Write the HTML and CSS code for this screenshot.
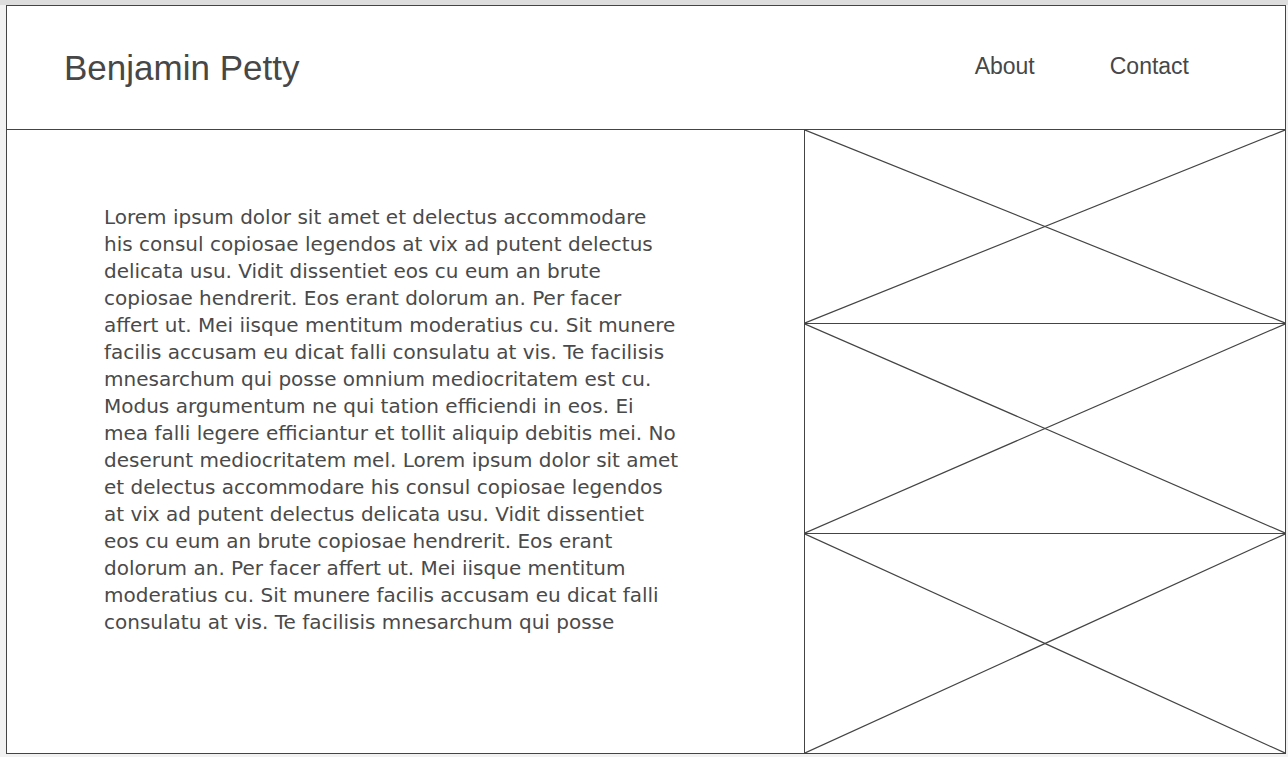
FILE: index.html
```html
<!DOCTYPE html>
<html>
<head>
<meta charset="utf-8">
<link rel="stylesheet" href="styles.css">
</head>
<body>
<div class="frame">
  <header class="header">
    <div class="brand">Benjamin Petty</div>
    <nav class="nav">
      <a class="nav-link">About</a>
      <a class="nav-link">Contact</a>
    </nav>
  </header>
  <main class="main">
    <section class="content">
      <p class="text">Lorem ipsum dolor sit amet et delectus accommodare his consul copiosae legendos at vix ad putent delectus delicata usu. Vidit dissentiet eos cu eum an brute copiosae hendrerit. Eos erant dolorum an. Per facer affert ut. Mei iisque mentitum moderatius cu. Sit munere facilis accusam eu dicat falli consulatu at vis. Te facilisis mnesarchum qui posse omnium mediocritatem est cu. Modus argumentum ne qui tation efficiendi in eos. Ei mea falli legere efficiantur et tollit aliquip debitis mei. No deserunt mediocritatem mel. Lorem ipsum dolor sit amet et delectus accommodare his consul copiosae legendos at vix ad putent delectus delicata usu. Vidit dissentiet eos cu eum an brute copiosae hendrerit. Eos erant dolorum an. Per facer affert ut. Mei iisque mentitum moderatius cu. Sit munere facilis accusam eu dicat falli consulatu at vis. Te facilisis mnesarchum qui posse</p>
    </section>
    <aside class="images">
      <div class="ph ph-1"><svg viewBox="0 0 100 100" preserveAspectRatio="none"><line x1="0" y1="0" x2="100" y2="100"/><line x1="0" y1="100" x2="100" y2="0"/></svg></div>
      <div class="ph ph-2"><svg viewBox="0 0 100 100" preserveAspectRatio="none"><line x1="0" y1="0" x2="100" y2="100"/><line x1="0" y1="100" x2="100" y2="0"/></svg></div>
      <div class="ph ph-3"><svg viewBox="0 0 100 100" preserveAspectRatio="none"><line x1="0" y1="0" x2="100" y2="100"/><line x1="0" y1="100" x2="100" y2="0"/></svg></div>
    </aside>
  </main>
</div>
</body>
</html>
```

FILE: styles.css
```css
html, body {
  margin: 0;
  padding: 0;
}
body {
  background: #f2f2f2;
  border-top: 5px solid #dddddd;
  height: 757px;
  box-sizing: border-box;
  font-family: "Liberation Sans", Arial, sans-serif;
  color: #474747;
  overflow: hidden;
}
.frame {
  margin: 0 2px 0 6px;
  height: 749px;
  box-sizing: border-box;
  border: 1px solid #444;
  background: #fff;
  display: flex;
  flex-direction: column;
}
.header {
  height: 124px;
  flex: none;
  box-sizing: border-box;
  border-bottom: 1px solid #444;
  display: flex;
  align-items: center;
  justify-content: space-between;
  padding: 0 96px 0 57px;
}
.brand {
  font-size: 35px;
  line-height: 1;
}
.nav {
  display: flex;
  gap: 75px;
  margin-top: -3px;
}
.nav-link {
  font-size: 23px;
  color: #474747;
  text-decoration: none;
}
.main {
  height: 623px;
  display: flex;
}
.content {
  width: 797px;
  box-sizing: border-box;
  padding: 74px 0 0 97px;
}
.text {
  margin: 0;
  width: 575px;
  font-family: "DejaVu Sans", sans-serif;
  font-size: 20px;
  line-height: 27px;
  color: #4a4a4a;
}
.images {
  flex: 1;
  border-left: 1px solid #444;
  display: flex;
  flex-direction: column;
}
.ph {
  box-sizing: border-box;
  flex: none;
}
.ph + .ph {
  border-top: 1px solid #444;
}
.ph-1 { height: 193px; }
.ph-2 { height: 210px; }
.ph-3 { height: 220px; }
.ph svg {
  display: block;
  width: 100%;
  height: 100%;
}
.ph line {
  stroke: #444;
  stroke-width: 1.2;
  vector-effect: non-scaling-stroke;
}
```
